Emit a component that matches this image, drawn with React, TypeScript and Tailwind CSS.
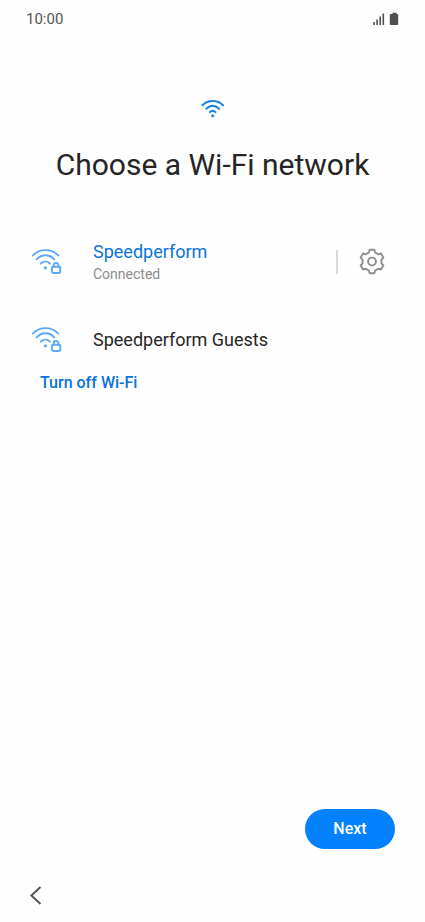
import React from "react";

function StatusIcons() {
  return (
    <svg viewBox="0 0 26 14" width="26" height="14" fill="#505050" aria-hidden="true">
      <rect x="0.200" y="10" width="1.600" height="3" />
      <rect x="3.300" y="7.500" width="1.600" height="5.500" />
      <rect x="6.400" y="4.500" width="1.600" height="8.500" />
      <rect x="9.500" y="1.500" width="1.600" height="11.500" />
      <path d="M19.500 .8h4V2h.7q1 0 1 1v9q0 1-1 1h-6.400q-1 0-1-1V3q0-1 1-1h1.700z" />
    </svg>
  );
}

function WifiIcon() {
  return (
    <svg viewBox="0 0 24 20" width="24" height="20" fill="none" stroke="#1b82e8" strokeWidth="2" strokeLinecap="round" aria-hidden="true">
      <path d="M1.400 6.200C7.200 .6 16.200 .6 22 6.200" />
      <path d="M5.300 9.700C9.200 5.900 14.200 5.900 18.100 9.700" />
      <path d="M8.900 13.100C10.700 11.500 12.700 11.500 14.500 13.100" />
      <circle cx="11.700" cy="16.700" r="1.500" fill="#1b82e8" stroke="none" />
    </svg>
  );
}

function WifiLockedIcon() {
  return (
    <svg viewBox="0 0 32 28" width="32" height="28" fill="none" stroke="#5ba9f8" strokeWidth="1.900" strokeLinecap="round" aria-hidden="true">
      <path d="M2.700 7.600C9.500 .3 21.500 .3 28.300 7.600" />
      <path d="M6.700 11.400C11.500 5.900 19.500 5.900 24.300 11.400" />
      <path d="M10.900 15.500C13.500 13 17.300 13 19.900 15.500" />
      <circle cx="15.400" cy="19.800" r="1.600" fill="#5ba9f8" stroke="none" />
      <rect x="21.900" y="18.800" width="8.400" height="6.200" rx="1.400" />
      <path d="M23.700 18.800v-1.400a2.400 2.400 0 0 1 4.800 0v1.400" />
    </svg>
  );
}

// One tooth of the gear, pointing up; the outline repeats it every 60 degrees.
const TOOTH = [
  [-4.6, -8.1],
  [-3, -9.3],
  [-2.4, -11.8],
  [2.4, -11.8],
  [3, -9.3],
];

const GEAR_POINTS = [0, 60, 120, 180, 240, 300]
  .flatMap((degrees) => {
    const a = (degrees * Math.PI) / 180;
    return TOOTH.map(
      ([x, y]) => `${13 + x * Math.cos(a) - y * Math.sin(a)},${12.5 + x * Math.sin(a) + y * Math.cos(a)}`,
    );
  })
  .join(" ");

function GearIcon() {
  return (
    <svg viewBox="0 0 26 26" width="26" height="26" fill="none" stroke="#8f8f8f" strokeWidth="1.900" strokeLinejoin="round" overflow="visible" aria-hidden="true">
      <polygon points={GEAR_POINTS} />
      <circle cx="13" cy="12.500" r="3.900" />
    </svg>
  );
}

export default function App() {
  return (
    <div className="flex min-h-screen flex-col bg-[#fefefe] font-[Roboto,sans-serif] text-[#252525]">
      <header className="flex h-[38px] items-center justify-between px-[26px] text-[15px] text-[#555]">
        <span>10:00</span>
        <StatusIcons />
      </header>
      <main className="flex flex-1 flex-col">
        <div className="mt-[61px] flex justify-center">
          <WifiIcon />
        </div>
        <h1 className="mt-7 text-center text-3xl">Choose a Wi-Fi network</h1>
        <ul className="mt-12 flex flex-col gap-4">
          <li className="flex h-[62px] items-center pl-[30px] pr-10">
            <button className="flex flex-1 items-center gap-[31px] text-left">
              <WifiLockedIcon />
              <span className="flex flex-col">
                <span className="text-lg leading-6 text-[#0a74d8]">Speedperform</span>
                <span className="text-sm text-[#8c8c8c]">Connected</span>
              </span>
            </button>
            <span className="h-6 w-0.5 bg-[#d8d8d8]" />
            <button className="ml-[21px]" aria-label="Network settings">
              <GearIcon />
            </button>
          </li>
          <li className="flex h-[62px] items-center pl-[30px] pr-10">
            <button className="flex flex-1 items-center gap-[31px] text-left">
              <WifiLockedIcon />
              <span className="text-lg">Speedperform Guests</span>
            </button>
          </li>
        </ul>
        <button className="ml-10 self-start text-base font-medium text-[#0a74d8]">Turn off Wi-Fi</button>
        <button className="mb-5 mr-[30px] mt-auto h-10 w-[90px] self-end rounded-full bg-[#0381fe] text-base font-medium text-white">Next</button>
      </main>
      <nav className="flex h-[53px] items-center px-7">
        <button aria-label="Back">
          <svg viewBox="0 0 16 20" width="16" height="20" fill="none" stroke="#555" strokeWidth="2" aria-hidden="true">
            <path d="M12.500 .9L3.400 9.400l9.100 8.600" />
          </svg>
        </button>
      </nav>
    </div>
  );
}
